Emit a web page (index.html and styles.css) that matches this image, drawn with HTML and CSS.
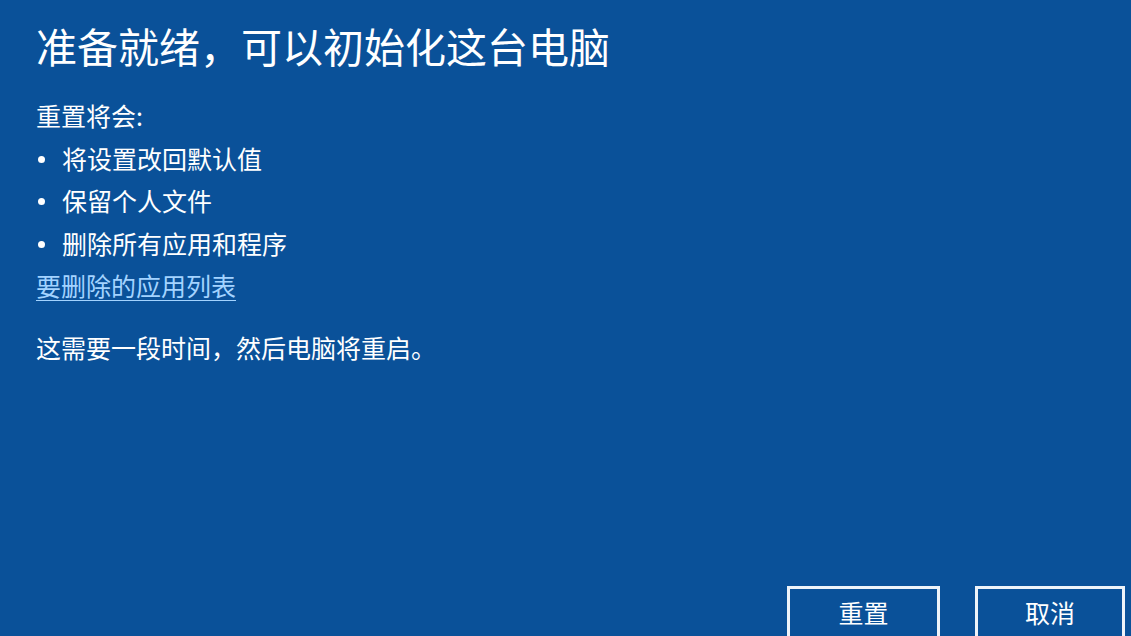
FILE: index.html
```html
<!DOCTYPE html>
<html lang="zh-CN">
<head>
<meta charset="utf-8">
<title>准备就绪，可以初始化这台电脑</title>
<link rel="stylesheet" href="styles.css">
</head>
<body>
<div class="page">
  <h1 class="title">准备就绪，可以初始化这台电脑</h1>
  <div class="content">
    <p class="line">重置将会:</p>
    <ul class="list">
      <li class="item"><span class="dot"></span>将设置改回默认值</li>
      <li class="item"><span class="dot"></span>保留个人文件</li>
      <li class="item"><span class="dot"></span>删除所有应用和程序</li>
    </ul>
    <a class="link" href="#">要删除的应用列表</a>
    <p class="line note">这需要一段时间，然后电脑将重启。</p>
  </div>
  <div class="footer">
    <button class="btn btn-reset">重置</button>
    <button class="btn btn-cancel">取消</button>
  </div>
</div>
</body>
</html>
```
FILE: styles.css
```css
html, body {
  margin: 0;
  padding: 0;
  background: #0a5199;
  overflow: hidden;
}
body {
  font-family: "Noto Sans CJK SC", "Noto Sans", sans-serif;
  color: #ffffff;
}
.page {
  height: 642px;
  display: flex;
  flex-direction: column;
  padding: 20px 0 0 36px;
  box-sizing: border-box;
}
.title {
  margin: 0;
  font-size: 41px;
  line-height: 50px;
  font-weight: 400;
  letter-spacing: 0;
}
.content {
  margin-top: 24px;
  font-size: 25px;
  line-height: 42.5px;
}
.line {
  margin: 0;
}
.list {
  list-style: none;
  margin: 0;
  padding: 0;
}
.item {
  display: flex;
  align-items: center;
}
.dot {
  width: 7px;
  height: 7px;
  border-radius: 50%;
  background: #ffffff;
  margin: 3px 17px 0 2px;
  flex: none;
}
.link {
  display: block;
  color: #a3d3ff;
  text-decoration: underline;
  text-decoration-thickness: 1px;
  text-underline-offset: 4px;
}
.note {
  margin-top: 19px;
}
.footer {
  margin-top: auto;
  display: flex;
  justify-content: flex-end;
  gap: 35px;
  padding-right: 6px;
}
.btn {
  box-sizing: border-box;
  height: 56px;
  background: transparent;
  border: 3px solid #eef3f9;
  color: #ffffff;
  font-family: "Noto Sans CJK SC", "Noto Sans", sans-serif;
  font-size: 25px;
  line-height: 1;
  padding: 0 0 4px 0;
}
.btn-reset {
  width: 153px;
}
.btn-cancel {
  width: 150px;
}
```
